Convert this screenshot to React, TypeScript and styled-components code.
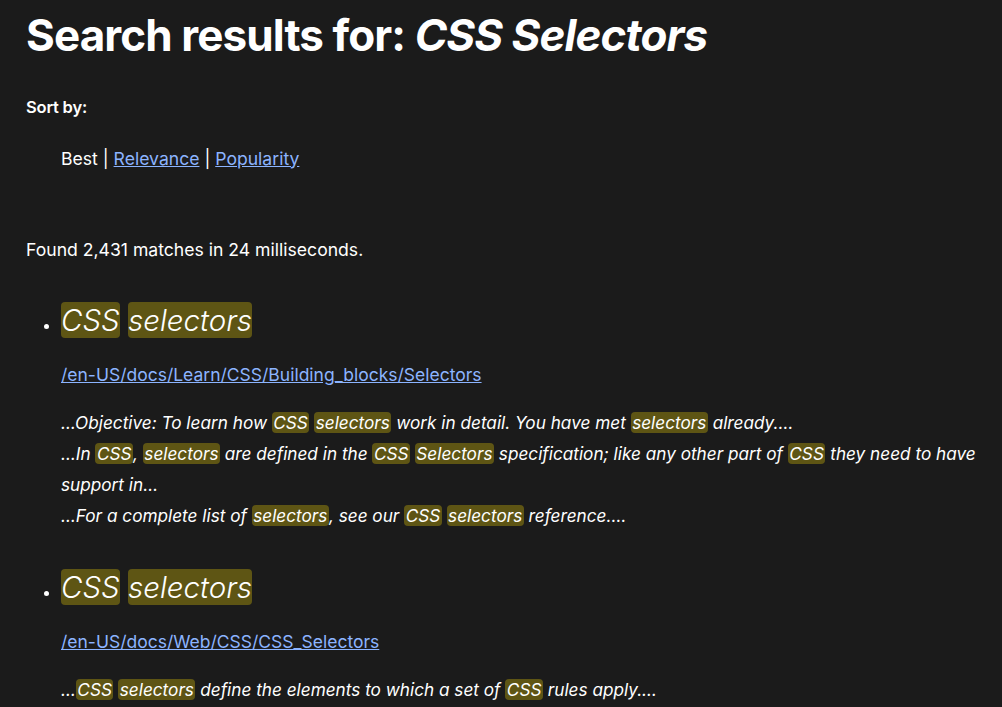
import { createGlobalStyle, styled } from "styled-components";

const GlobalStyle = createGlobalStyle`
  html, body {
    margin: 0;
    background: #1b1b1b;
  }
  body {
    color: #ffffff;
    font-family: Inter, "Noto Sans", sans-serif;
    font-size: 16px;
  }
`;

const results = [
  {
    url: "/en-US/docs/Learn/CSS/Building_blocks/Selectors",
    excerpts: [
      ["…Objective: To learn how ", "CSS", " ", "selectors", " work in detail. You have met ", "selectors", " already.…"],
      ["…In ", "CSS", ", ", "selectors", " are defined in the ", "CSS", " ", "Selectors", " specification; like any other part of ", "CSS", " they need to have support in…"],
      ["…For a complete list of ", "selectors", ", see our ", "CSS", " ", "selectors", " reference.…"],
    ],
  },
  {
    url: "/en-US/docs/Web/CSS/CSS_Selectors",
    excerpts: [["…", "CSS", " ", "selectors", " define the elements to which a set of ", "CSS", " rules apply.…"]],
  },
];

const App: React.FC = () => {
  return (
    <Page>
      <GlobalStyle />
      <Title>
        Search results for: <em>CSS Selectors</em>
      </Title>
      <SortLabel>Sort by:</SortLabel>
      <SortList>
        <li>
          Best <Sep>|</Sep> <a href="#">Relevance</a> <Sep>|</Sep>{" "}
          <a href="#">Popularity</a>
        </li>
      </SortList>
      <Summary>Found 2,431 matches in 24 milliseconds.</Summary>
      <Results>
        {results.map((r) => (
          <li key={r.url}>
            <ResultTitle>
              <Mark $tight>CSS</Mark> <Mark $tight>selectors</Mark>
            </ResultTitle>
            <UrlLine>
              <a href="#">{r.url}</a>
            </UrlLine>
            <Excerpts>
              {r.excerpts.map((parts, i) => (
                <div key={i}>
                  {parts.map((p, j) =>
                    j % 2 === 1 ? <Mark key={j}>{p}</Mark> : <span key={j}>{p}</span>
                  )}
                </div>
              ))}
            </Excerpts>
          </li>
        ))}
      </Results>
    </Page>
  );
};

const Page = styled.main`
  padding: 0 26px;

  a {
    color: #8cb4ff;
    text-decoration: underline;
  }
`;

const Title = styled.h1`
  margin: 0;
  padding-top: 9px;
  font-size: 44px;
  font-weight: 700;
  line-height: 1.2;
  letter-spacing: -0.9px;

  em {
    font-style: italic;
  }
`;

const SortLabel = styled.div`
  margin-top: 33px;
  font-weight: 600;
  font-size: 16.5px;
  line-height: 24px;
  letter-spacing: -0.2px;
`;

const SortList = styled.ul`
  list-style: none;
  margin: 28px 0 0;
  padding-left: 35px;
  font-size: 17.6px;
  line-height: 24px;
`;

const Sep = styled.span`
  color: #fff;
`;

const Summary = styled.p`
  margin: 67px 0 0;
  font-size: 17.6px;
  line-height: 24px;
`;

const Results = styled.ul`
  margin: 40px 0 0;
  padding-left: 35px;

  li {
    margin-bottom: 38px;
  }
`;

const ResultTitle = styled.h2`
  margin: 0;
  font-size: 29.5px;
  font-weight: 300;
  font-style: italic;
  line-height: 36px;
`;

const Mark = styled.mark<{ $tight?: boolean }>`
  background: #5e5514;
  color: #fff;
  border-radius: 4px;
  padding: ${(p) => (p.$tight ? "0" : "0 1.5px")};
`;

const UrlLine = styled.div`
  margin-top: 25px;
  font-size: 17.5px;
  line-height: 24px;
`;

const Excerpts = styled.div`
  margin-top: 20px;
  font-size: 17.2px;
  font-style: italic;
  line-height: 31px;
`;

export default App;
